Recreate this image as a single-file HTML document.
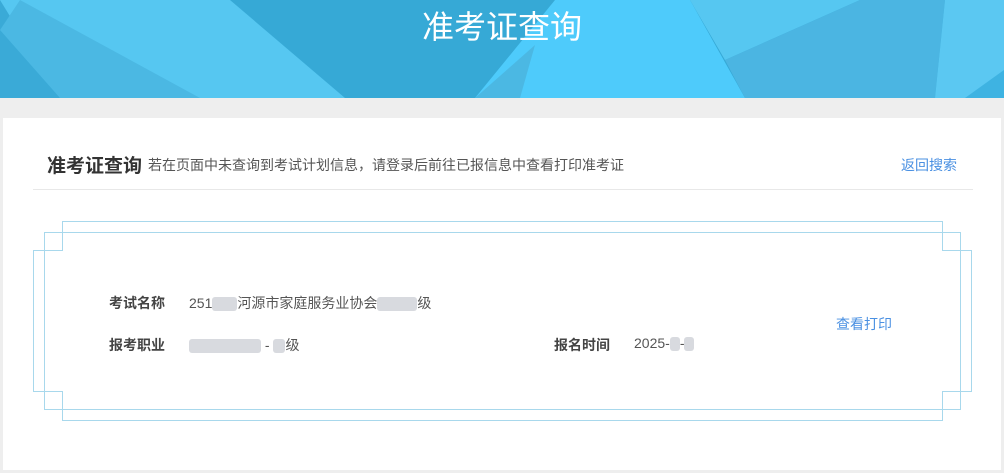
<!DOCTYPE html>
<html><head><meta charset="utf-8"><style>
body{margin:0;width:1004px;height:473px;background:#eeeeee;font-family:"Liberation Sans","Noto Sans CJK SC",sans-serif;position:relative;overflow:hidden}
.ban{position:absolute;left:0;top:0;width:1004px;height:98px;background:#36a9d6;overflow:hidden}
.ban svg{position:absolute;left:0;top:0}
.title{position:absolute;left:0;width:1004px;top:7px;text-align:center;color:#fff;font-size:32px;line-height:40px}
.card{position:absolute;left:3px;top:118px;width:998px;height:352px;background:#fff}
.abs{position:absolute;white-space:nowrap}
.blur{display:inline-block;background:#d8dadf;height:14px;vertical-align:middle;border-radius:3px}
</style></head><body>
<div class="ban"><svg width="1004" height="98">
<polygon points="0,0 230,0 345,98 0,98" fill="#56c7f1"/>
<polygon points="0,0 60,98 0,98" fill="#3aaad7"/>
<polygon points="20,0 200,98 60,98 0,30" fill="#4bb8e3"/>
<polygon points="555,0 690,0 745,98 475,98" fill="#4ecbfb"/>
<polygon points="535,45 475,98 520,98" fill="#4bb8e3"/>
<polygon points="690,0 860,0 725,60" fill="#56c7f1"/>
<polygon points="725,60 860,0 945,0 935,98 745,98" fill="#4bb5e2"/>
<polygon points="945,0 1004,0 1004,98 935,98" fill="#5bc8f2"/>
<polygon points="1004,70 1004,98 965,98" fill="#3eb3e2"/>
</svg>
<div class="title">准考证查询</div></div>
<div class="card">
<div class="abs" style="left:44px;top:33px;font-size:19px;font-weight:bold;color:#333">准考证查询</div>
<div class="abs" style="left:145px;top:37px;font-size:14px;color:#555">若在页面中未查询到考试计划信息，请登录后前往已报信息中查看打印准考证</div>
<div class="abs" style="left:898px;top:37px;font-size:14px;color:#4a90e2">返回搜索</div>
<div class="abs" style="left:30px;top:71px;width:940px;height:1px;background:#e8e8e8"></div>
</div>
<svg class="abs" style="left:0;top:0" width="1004" height="473">
<rect x="44.5" y="232.5" width="916" height="177" fill="none" stroke="#a8d8ec"/>
<polygon points="62.5,221.5 942.5,221.5 942.5,250.5 971.5,250.5 971.5,391.5 942.5,391.5 942.5,420.5 62.5,420.5 62.5,391.5 33.5,391.5 33.5,250.5 62.5,250.5" fill="none" stroke="#a8d8ec"/>
</svg>
<div class="abs" style="left:109px;top:293px;font-size:14px;font-weight:bold;color:#444">考试名称</div>
<div class="abs" style="left:189px;top:293px;font-size:14px;color:#555">251<span class="blur" style="width:25px"></span>河源市家庭服务业协会<span class="blur" style="width:40px"></span>级</div>
<div class="abs" style="left:109px;top:335px;font-size:14px;font-weight:bold;color:#444">报考职业</div>
<div class="abs" style="left:189px;top:335px;font-size:14px;color:#555"><span class="blur" style="width:72px"></span> - <span class="blur" style="width:12px"></span>级</div>
<div class="abs" style="left:554px;top:335px;font-size:14px;font-weight:bold;color:#444">报名时间</div>
<div class="abs" style="left:634px;top:335px;font-size:14px;color:#555">2025-<span class="blur" style="width:10px"></span>-<span class="blur" style="width:10px"></span></div>
<div class="abs" style="left:836px;top:314px;font-size:14px;color:#4a90e2">查看打印</div>
</body></html>
